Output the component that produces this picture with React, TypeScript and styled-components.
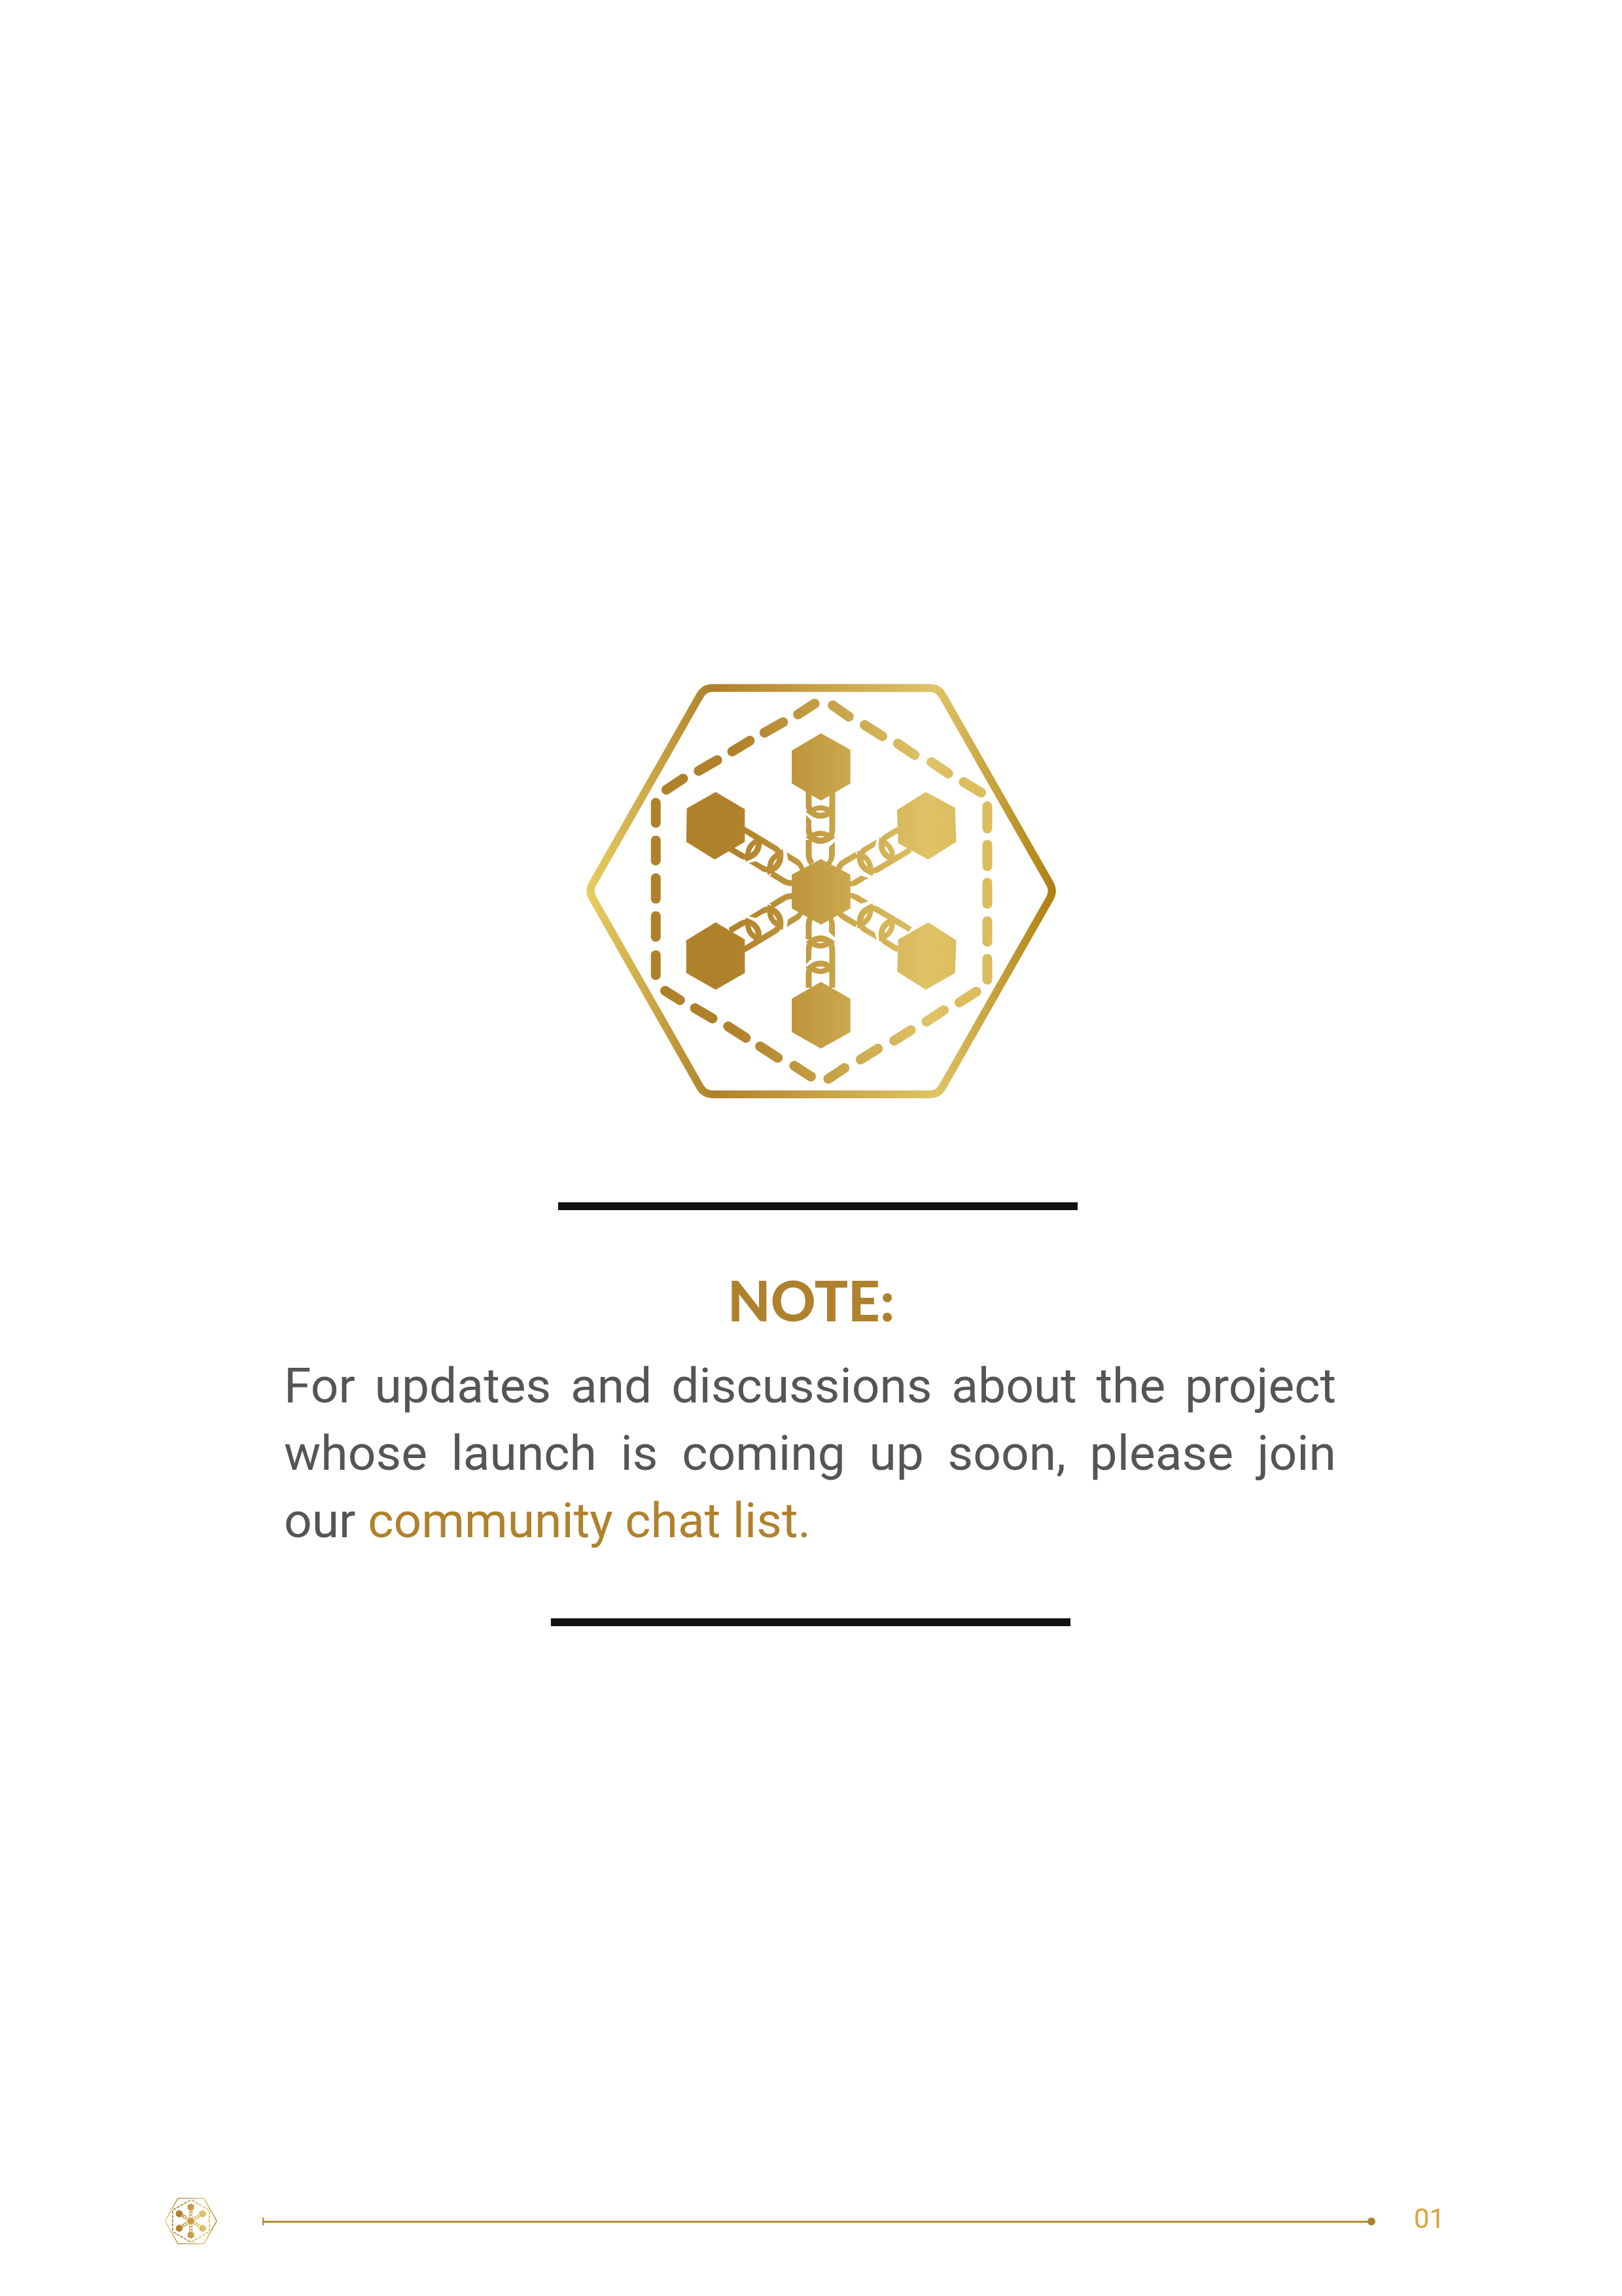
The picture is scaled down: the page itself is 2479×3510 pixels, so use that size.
import React from "react";
import styled, { createGlobalStyle } from "styled-components";

const Global = createGlobalStyle`
  html, body { margin: 0; padding: 0; background: #fff; }
`;

const Sheet = styled.div`
  width: 2479px;
  height: 3510px;
  display: flex;
  flex-direction: column;
  background: #fff;
  overflow: hidden;
`;

const Main = styled.main`
  padding-top: 1019px;
  display: flex;
  flex-direction: column;
  flex: 1;
`;

const HeroIcon = styled.div`
  margin-left: 878px;
  width: 740px;
  height: 680px;
  display: flex;
`;

const Rule = styled.div<{ $left: number; $top: number }>`
  width: 794px;
  height: 12px;
  margin-left: ${(p) => p.$left}px;
  margin-top: ${(p) => p.$top}px;
  background: #111111;
`;

const Title = styled.h1`
  margin: 87px 0 0;
  text-align: center;
  font-family: "Lato", "Liberation Sans", sans-serif;
  font-weight: 900;
  font-size: 85px;
  line-height: 100px;
  color: #b0812d;
`;

const Paragraph = styled.p`
  margin: 30px 0 0 434px;
  width: 1608px;
  font-family: "Roboto", "Liberation Sans", sans-serif;
  font-size: 75px;
  line-height: 103px;
  color: #555555;
  text-align: justify;
`;

const Accent = styled.span`
  color: #b0812d;
`;

const Footer = styled.footer`
  height: 153px;
  display: flex;
  align-items: flex-start;
  padding: 0 0 0 250px;
`;

const FooterIcon = styled.div`
  width: 82px;
  height: 76px;
  display: flex;
`;

const Track = styled.div`
  margin: 33px 0 0 69px;
  width: 1701px;
  height: 12px;
  display: flex;
  align-items: center;
`;

const TrackTick = styled.span`
  width: 2px;
  height: 12px;
  background: #b08a2e;
`;

const TrackLine = styled.span`
  flex: 1;
  height: 3px;
  background: #b08a2e;
`;

const TrackDot = styled.span`
  width: 12px;
  height: 12px;
  border-radius: 50%;
  background: #b0812d;
`;

const PageNumber = styled.span`
  margin: 10px 0 0 59px;
  font-family: "Roboto", "Liberation Sans", sans-serif;
  font-size: 42px;
  line-height: 50px;
  color: #d9a63a;
`;

const SX = 2.108;
const SY = 2.294;
const CX = 375;
const CY = 341;

const pts = (list: number[][]) =>
  list.map(([x, y]) => `${(x / SX).toFixed(1)},${(y / SY).toFixed(1)}`).join(" ");

const roundedPoly = (list: number[][], r: number) => {
  const p = list.map(([x, y]) => [x / SX, y / SY]);
  const n = p.length;
  let d = "";
  p.forEach((v, i) => {
    const a = p[(i + n - 1) % n];
    const b = p[(i + 1) % n];
    const la = Math.hypot(a[0] - v[0], a[1] - v[1]);
    const lb = Math.hypot(b[0] - v[0], b[1] - v[1]);
    const s = [v[0] + ((a[0] - v[0]) * r) / la, v[1] + ((a[1] - v[1]) * r) / la];
    const e = [v[0] + ((b[0] - v[0]) * r) / lb, v[1] + ((b[1] - v[1]) * r) / lb];
    d += `${i === 0 ? "M" : "L"} ${s[0].toFixed(1)},${s[1].toFixed(1)} Q ${v[0].toFixed(1)},${v[1].toFixed(1)} ${e[0].toFixed(1)},${e[1].toFixed(1)} `;
  });
  return d + "Z";
};

const hexes = [
  [[794, 234], [889, 292], [889, 410], [794, 470], [700, 410], [700, 295]],
  [[455, 440], [549, 500], [549, 615], [452, 677], [360, 615], [362, 497]],
  [[1132, 440], [1226, 495], [1230, 615], [1140, 677], [1043, 620], [1039, 503]],
  [[455, 897], [549, 957], [549, 1075], [455, 1133], [360, 1075], [360, 960]],
  [[1140, 897], [1230, 960], [1226, 1075], [1132, 1133], [1040, 1070], [1043, 957]],
  [[794, 1106], [889, 1165], [889, 1282], [794, 1340], [700, 1282], [700, 1165]],
  [[794, 675], [889, 730], [889, 848], [794, 905], [700, 848], [700, 730]],
];

const dashes: number[][] = [
  [774, 130, 720, 168], [672, 195, 612, 232], [565, 260, 508, 298], [460, 328, 400, 366], [350, 393, 296, 432],
  [262, 478, 262, 548], [262, 610, 262, 680], [262, 742, 262, 814], [262, 875, 262, 948], [262, 1012, 262, 1082],
  [292, 1137, 340, 1170], [388, 1198, 445, 1234], [495, 1262, 552, 1302], [598, 1332, 655, 1372], [708, 1400, 762, 1438],
  [818, 1446, 870, 1408], [922, 1378, 978, 1340], [1030, 1312, 1084, 1275], [1134, 1245, 1190, 1205], [1240, 1178, 1295, 1140],
  [1330, 490, 1330, 568], [1330, 625, 1330, 700], [1330, 758, 1330, 832], [1330, 893, 1330, 965], [1330, 1025, 1330, 1098],
  [832, 136, 884, 176], [935, 205, 992, 244], [1042, 270, 1096, 310], [1150, 335, 1204, 375], [1254, 405, 1310, 442],
];

const chainStrokes = [
  "M -17,-150 L -17,-129 C -17,-119 -8,-113 1,-113 C 10,-113 19,-119 19,-129 L 19,-150",
  "M -17,-92 C -17,-81 -8,-75 1,-75 C 10,-75 19,-81 19,-92 L 19,-129",
  "M -17,-76 L -17,-54 C -17,-47 -15,-44 -12,-40",
];
const chainRings = [
  "M -15,-119 Q 1,-131 17,-119 Q 1,-107 -15,-119 Z",
  "M -15,-80 Q 1,-92 17,-80 Q 1,-68 -15,-80 Z",
];
const chainFills = [
  "M -21,-114 L -13,-106 L -13,-90 L -21,-90 Z",
  "M 23,-73 L 14,-65 L 14,-52 C 14,-46 12,-44 9,-40 L 16,-37 C 20,-42 23,-48 23,-54 Z",
];

const arms = [
  { rot: 0, flip: false },
  { rot: 59, flip: false },
  { rot: -59, flip: false },
  { rot: 0, flip: true },
  { rot: 59, flip: true },
  { rot: -59, flip: true },
];

const place = (d: string, rot: number, flip: boolean) => {
  const a = (rot * Math.PI) / 180;
  return d.replace(/(-?[\d.]+),(-?[\d.]+)/g, (_m, xs, ys) => {
    const x = parseFloat(xs);
    const y = parseFloat(ys);
    const rx = x * Math.cos(a) - y * Math.sin(a);
    const ry = x * Math.sin(a) + y * Math.cos(a);
    return `${(CX + rx).toFixed(1)},${(CY + (flip ? -ry : ry)).toFixed(1)}`;
  });
};

const Emblem: React.FC<{ id: string }> = ({ id }) => (
  <svg width="100%" height="100%" viewBox="0 0 740 680" preserveAspectRatio="none">
    <defs>
      <linearGradient id={`${id}-frame`} gradientUnits="userSpaceOnUse" x1="15" y1="0" x2="739" y2="0">
        <stop offset="0" stopColor="#e9cf62" />
        <stop offset="0.27" stopColor="#b0812b" />
        <stop offset="0.74" stopColor="#dfc366" />
        <stop offset="1" stopColor="#ad7e10" />
      </linearGradient>
      <linearGradient id={`${id}-core`} gradientUnits="userSpaceOnUse" x1="171" y1="0" x2="583" y2="0">
        <stop offset="0.18" stopColor="#b0812b" />
        <stop offset="0.9" stopColor="#dfc366" />
        <stop offset="1" stopColor="#dcbd5e" />
      </linearGradient>
    </defs>
    <path
      d={roundedPoly([[418, 75], [1172, 75], [1545, 787], [1172, 1500], [418, 1500], [45, 787]], 13)}
      fill="none"
      stroke={`url(#${id}-frame)`}
      strokeWidth="12"
      strokeLinejoin="round"
    />
    {dashes.map(([x1, y1, x2, y2], i) => (
      <line
        key={i}
        x1={x1 / SX}
        y1={y1 / SY}
        x2={x2 / SX}
        y2={y2 / SY}
        stroke={`url(#${id}-core)`}
        strokeWidth="15"
        strokeLinecap="round"
      />
    ))}
    {arms.map(({ rot, flip }, i) => (
      <g key={i}>
        {chainStrokes.map((d, j) => (
          <path key={j} d={place(d, rot, flip)} fill="none" stroke={`url(#${id}-core)`} strokeWidth="9" />
        ))}
        {chainRings.map((d, j) => (
          <path key={j} d={place(d, rot, flip)} fill="none" stroke={`url(#${id}-core)`} strokeWidth="8" />
        ))}
        {chainFills.map((d, j) => (
          <path key={j} d={place(d, rot, flip)} fill={`url(#${id}-core)`} />
        ))}
      </g>
    ))}
    {hexes.map((h, i) => (
      <polygon key={i} points={pts(h)} fill={`url(#${id}-core)`} />
    ))}
  </svg>
);

export default function App() {
  return (
    <Sheet>
      <Global />
      <Main>
        <HeroIcon>
          <Emblem id="hero" />
        </HeroIcon>
        <Rule $left={853} $top={139} />
        <Title>NOTE:</Title>
        <Paragraph>
          For updates and discussions about the project whose launch is coming up soon, please join our{" "}
          <Accent>community chat list.</Accent>
        </Paragraph>
        <Rule $left={842} $top={98} />
      </Main>
      <Footer>
        <FooterIcon>
          <Emblem id="mini" />
        </FooterIcon>
        <Track>
          <TrackTick />
          <TrackLine />
          <TrackDot />
        </Track>
        <PageNumber>01</PageNumber>
      </Footer>
    </Sheet>
  );
}
